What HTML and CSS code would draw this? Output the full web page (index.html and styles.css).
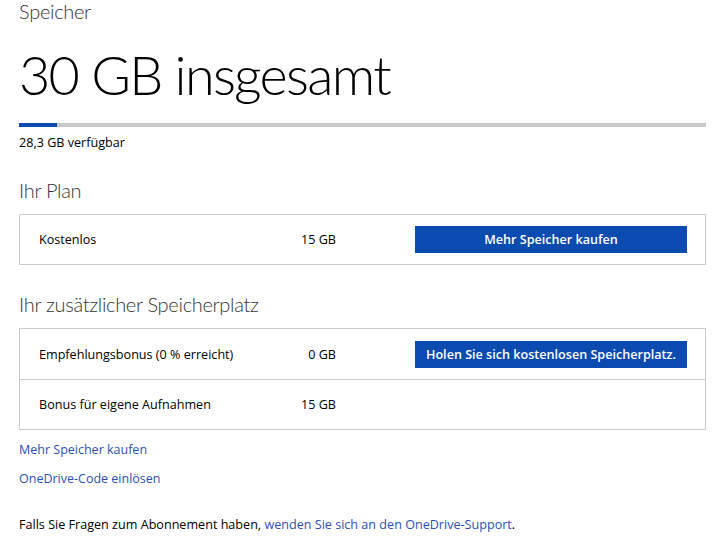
FILE: index.html
```html
<!DOCTYPE html>
<html lang="de">
<head>
  <meta charset="UTF-8">
  <meta name="viewport" content="width=device-width, initial-scale=1.0">
  <title>Speicher</title>
  <link rel="stylesheet" href="styles.css">
</head>
<body>
  <div id="page">
    <div class="section-title first">Speicher</div>
    <h1 class="total">30 GB insgesamt</h1>

    <div class="usage-bar">
      <div class="usage-fill" style="width: 5.6%"></div>
    </div>
    <div class="available">28,3 GB verfügbar</div>

    <div class="section-title">Ihr Plan</div>
    <div class="plan-box">
      <div class="plan-row">
        <span class="plan-name">Kostenlos</span>
        <span class="plan-size">15 GB</span>
        <a class="btn" href="#">Mehr Speicher kaufen</a>
      </div>
    </div>

    <div class="section-title">Ihr zusätzlicher Speicherplatz</div>
    <div class="plan-box">
      <div class="plan-row">
        <span class="plan-name">Empfehlungsbonus (0 % erreicht)</span>
        <span class="plan-size">0 GB</span>
        <a class="btn" href="#">Holen Sie sich kostenlosen Speicherplatz.</a>
      </div>
      <div class="plan-row">
        <span class="plan-name">Bonus für eigene Aufnahmen</span>
        <span class="plan-size">15 GB</span>
      </div>
    </div>

    <a class="link first-link" href="#">Mehr Speicher kaufen</a>
    <a class="link" href="#">OneDrive-Code einlösen</a>

    <p class="footer">Falls Sie Fragen zum Abonnement haben, <a href="#">wenden Sie sich an den OneDrive-Support</a>.</p>
  </div>
</body>
</html>
```

FILE: styles.css
```css
body {
  margin: 0;
  background: #fff;
  color: #000;
  font-family: "Open Sans", "Liberation Sans", sans-serif;
  font-size: 12.6px;
}

#page {
  padding: 0 20px 0 19px;
}

.section-title {
  font-family: Lato, "Open Sans", sans-serif;
  font-size: 20px;
  font-weight: 300;
  line-height: 26px;
  letter-spacing: -0.3px;
  color: #333;
  margin-top: 26px;
}
.section-title.first {
  margin-top: 0;
  line-height: 22px;
}

.total {
  margin: 21px 0 0;
  font-family: Lato, "Open Sans", sans-serif;
  font-size: 54px;
  font-weight: 300;
  line-height: 64px;
  letter-spacing: -1.7px;
  color: #000;
}

.usage-bar {
  margin-top: 16px;
  height: 4px;
  background: #c8c8c8;
}
.usage-fill {
  height: 4px;
  background: #0b4aaf;
}

.available {
  margin-top: 8px;
  line-height: 16px;
}

.plan-box {
  margin-top: 11px;
  border: 1px solid #cccccc;
}

.plan-row {
  display: flex;
  align-items: center;
  min-height: 49px;
  padding: 0 18px 0 19px;
}
.plan-row + .plan-row {
  border-top: 1px solid #cccccc;
}
.plan-box .plan-row:first-child:not(:last-child) {
  min-height: 50px;
}

.plan-name {
  flex: 0 0 237px;
}
.plan-size {
  flex: 0 0 60px;
  text-align: right;
}

.btn {
  margin-left: auto;
  width: 272px;
  height: 27px;
  line-height: 27px;
  background: #0b4aaf;
  color: #fff;
  text-align: center;
  font-weight: 600;
  font-size: 12.6px;
  text-decoration: none;
}

.link {
  display: block;
  margin-top: 11px;
  line-height: 18px;
  font-size: 12.5px;
  color: #2b50b0;
  text-decoration: none;
}
.link.first-link {
  margin-top: 11px;
}

.footer {
  margin: 28px 0 0;
  line-height: 18px;
}
.footer a {
  color: #2b50b0;
  text-decoration: none;
}
```
